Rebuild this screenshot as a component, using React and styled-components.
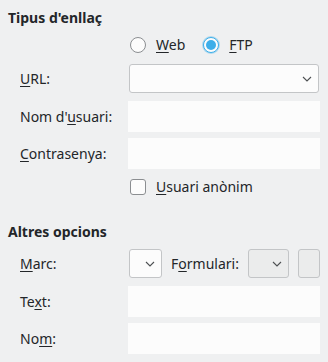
import React from "react";
import styled, { createGlobalStyle } from "styled-components";

const Global = createGlobalStyle`
  html, body { margin: 0; padding: 0; background: #eff0f1; }
  body {
    font-family: "Noto Sans", "DejaVu Sans", sans-serif;
    font-size: 14px;
    color: #232629;
  }
`;

const Page = styled.div`
  width: 328px;
  height: 362px;
  box-sizing: border-box;
  padding: 8px 8px 0;
  display: flex;
  flex-direction: column;
  overflow: hidden;
`;

const SectionTitle = styled.div`
  font-weight: bold;
  line-height: 19px;
  margin-top: ${(p) => p.$top || 0}px;
`;

const Row = styled.div`
  display: grid;
  grid-template-columns: 120px 192px;
  align-items: center;
  height: ${(p) => p.$h || 31}px;
  margin-top: ${(p) => p.$top || 0}px;
`;

const Label = styled.label`
  padding-left: 12px;
  line-height: 19px;
  white-space: nowrap;
`;

const Mn = styled.u`
  text-decoration: underline;
  text-underline-offset: 2px;
  text-decoration-thickness: 1px;
`;

const Field = styled.div`
  height: 31px;
  background: #fcfcfc;
`;

const Combo = styled.div`
  margin: 0 1px;
  height: 29px;
  box-sizing: border-box;
  border: 1px solid #c3c5c7;
  border-radius: 3px;
  background: ${(p) => (p.$grey ? "#ebecec" : "#fcfcfc")};
  width: ${(p) => (p.$w ? `${p.$w}px` : "auto")};
  display: flex;
  align-items: center;
  justify-content: flex-end;
  padding-right: 6px;
`;

const Chevron = () => (
  <svg width="10" height="6" viewBox="0 0 10 6">
    <path d="M1 1 L5 5 L9 1" fill="none" stroke="#4d5052" strokeWidth="1.1" />
  </svg>
);

const Options = styled.div`
  grid-column: 2;
  display: flex;
  align-items: center;
  gap: 18px;
  padding-left: 2px;
`;

const Choice = styled.span`
  display: inline-flex;
  align-items: center;
  gap: 10px;
  line-height: 16px;
`;

const Radio = styled.span`
  width: 16px;
  height: 16px;
  box-sizing: border-box;
  border-radius: 50%;
  border: 1px solid ${(p) => (p.$on ? "#3daee9" : "#8b8e91")};
  background: #fcfcfc;
  box-shadow: ${(p) => (p.$on ? "0 0 0 1px rgba(61,174,233,0.35)" : "none")};
  display: inline-flex;
  align-items: center;
  justify-content: center;
  &::after {
    content: "";
    width: 10px;
    height: 10px;
    border-radius: 50%;
    background: #3daee9;
    display: ${(p) => (p.$on ? "block" : "none")};
  }
`;

const Check = styled.span`
  width: 16px;
  height: 16px;
  box-sizing: border-box;
  border-radius: 3px;
  border: 1px solid #8b8e91;
  background: #fcfcfc;
`;

const Inline = styled.div`
  display: flex;
  align-items: center;
`;

const InlineLabel = styled.span`
  margin: 0 8px 0 8px;
  line-height: 19px;
  white-space: nowrap;
`;

const SmallButton = styled.div`
  width: 22px;
  height: 29px;
  box-sizing: border-box;
  border: 1px solid #c3c5c7;
  border-radius: 3px;
  background: #ebecec;
  margin-left: 8px;
`;

export default function App() {
  return (
    <>
      <Global />
      <Page>
        <SectionTitle>Tipus d'enllaç</SectionTitle>
        <Row $h={16} $top={10}>
          <Options>
            <Choice>
              <Radio />
              <span>
                <Mn>W</Mn>eb
              </span>
            </Choice>
            <Choice>
              <Radio $on />
              <span>
                <Mn>F</Mn>TP
              </span>
            </Choice>
          </Options>
        </Row>
        <Row $top={10}>
          <Label>
            <Mn>U</Mn>RL:
          </Label>
          <Combo>
            <Chevron />
          </Combo>
        </Row>
        <Row $top={7}>
          <Label>
            Nom d'<Mn>u</Mn>suari:
          </Label>
          <Field />
        </Row>
        <Row $top={6}>
          <Label>
            <Mn>C</Mn>ontrasenya:
          </Label>
          <Field />
        </Row>
        <Row $h={16} $top={10}>
          <Options>
            <Choice>
              <Check />
              <span>
                <Mn>U</Mn>suari anònim
              </span>
            </Choice>
          </Options>
        </Row>
        <SectionTitle $top={27}>Altres opcions</SectionTitle>
        <Row $top={7}>
          <Label>
            <Mn>M</Mn>arc:
          </Label>
          <Inline>
            <Combo $w={33}>
              <Chevron />
            </Combo>
            <InlineLabel>
              F<Mn>o</Mn>rmulari:
            </InlineLabel>
            <Combo $w={41} $grey>
              <Chevron />
            </Combo>
            <SmallButton />
          </Inline>
        </Row>
        <Row $top={7}>
          <Label>
            Te<Mn>x</Mn>t:
          </Label>
          <Field />
        </Row>
        <Row $top={6}>
          <Label>
            No<Mn>m</Mn>:
          </Label>
          <Field />
        </Row>
      </Page>
    </>
  );
}
